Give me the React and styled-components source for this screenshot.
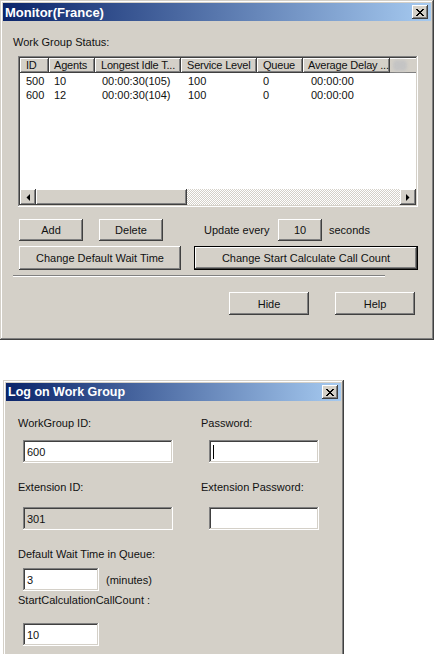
import React from 'react';
import styled, { createGlobalStyle, css } from 'styled-components';

const face = '#D4D0C8';

const GlobalStyle = createGlobalStyle`
  html, body {
    margin: 0;
    padding: 0;
    background: #ffffff;
    overflow: hidden;
  }
  body {
    font-family: "Liberation Sans", Arial, sans-serif;
    font-size: 11px;
    color: #111111;
  }
`;

const raised = css`
  box-shadow: inset -1px -1px #404040, inset 1px 1px #ffffff,
    inset -2px -2px #808080, inset 2px 2px ${face};
`;

const sunken = css`
  box-shadow: inset -1px -1px #ffffff, inset 1px 1px #808080,
    inset -2px -2px ${face}, inset 2px 2px #404040;
`;

const Page = styled.div`
  display: flex;
  flex-direction: column;
  align-items: flex-start;
  height: 654px;
  overflow: hidden;
`;

const Window = styled.div`
  box-sizing: border-box;
  flex-shrink: 0;
  width: ${p => p.$w}px;
  height: ${p => p.$h}px;
  margin: ${p => p.$m};
  padding: 3px;
  background: ${face};
  box-shadow: inset -1px -1px #404040, inset 1px 1px ${face},
    inset -2px -2px #808080, inset 2px 2px #ffffff;
`;

const TitleBar = styled.div`
  height: 18px;
  display: flex;
  align-items: center;
  justify-content: space-between;
  padding: 0 3px 0 2px;
  background: linear-gradient(to right, #0a246a, #a6caf0);
  color: #ffffff;
  font-weight: bold;
  font-size: ${p => p.$size}px;
`;

const CloseBtn = styled.div`
  width: 16px;
  height: 14px;
  display: flex;
  align-items: center;
  justify-content: center;
  background: ${face};
  ${raised};
`;

const xPixels = [
  '11....11',
  '.11..11.',
  '..1111..',
  '...11...',
  '..1111..',
  '.11..11.',
  '11....11',
];

const CloseGlyph = () => (
  <svg width="8" height="7" viewBox="0 0 8 7" shapeRendering="crispEdges">
    {xPixels.map((row, y) =>
      row.split('').map((c, x) =>
        c === '1' ? <rect key={`${x}-${y}`} x={x} y={y} width="1" height="1" fill="#000" /> : null
      )
    )}
  </svg>
);

const Body = styled.div`
  padding: ${p => p.$pad};
`;

const Label = styled.div`
  line-height: 14px;
  height: 14px;
  white-space: nowrap;
  margin-top: ${p => p.$mt || 0}px;
`;

/* ---------- list view ---------- */

const cols = [29, 46, 86, 76, 46, 87];
const headPad = [6, 5, 6, 6, 6, 5];

const ListView = styled.div`
  box-sizing: border-box;
  width: 400px;
  height: 151px;
  margin: 7px 0 0 5px;
  padding: 2px;
  background: #ffffff;
  display: flex;
  flex-direction: column;
  ${sunken};
`;

const HeaderRow = styled.div`
  display: flex;
  height: 15px;
  flex-shrink: 0;
`;

const HeaderCell = styled.div`
  box-sizing: border-box;
  width: ${p => p.$w}px;
  flex-shrink: 0;
  padding-left: ${p => p.$pl}px;
  line-height: 15px;
  letter-spacing: -0.2px;
  white-space: nowrap;
  overflow: hidden;
  background: ${face};
  box-shadow: inset -1px -1px #404040, inset 1px 1px #ffffff, inset -2px -2px #808080;
`;

const HeaderFiller = styled.div`
  flex: 1;
  background: ${face};
  box-shadow: inset 0 1px #ffffff, inset 0 -1px #808080;
  display: flex;
  align-items: center;
  padding-left: 3px;
`;

const Smudge = styled.div`
  width: 14px;
  height: 11px;
  border-radius: 4px;
  background: #c4c4c4;
  filter: blur(1.5px);
`;

const Rows = styled.div`
  flex: 1;
  padding-top: 1px;
`;

const DataRow = styled.div`
  display: flex;
  height: 14px;
  line-height: 14px;
`;

const DataCell = styled.div`
  box-sizing: border-box;
  width: ${p => p.$w}px;
  flex-shrink: 0;
  padding-left: ${p => p.$pl}px;
  white-space: nowrap;
`;

const HScroll = styled.div`
  display: flex;
  height: 16px;
  flex-shrink: 0;
`;

const ScrollArrow = styled.div`
  width: 16px;
  height: 16px;
  flex-shrink: 0;
  display: flex;
  align-items: center;
  justify-content: center;
  background: ${face};
  ${raised};
`;

const Thumb = styled.div`
  width: 151px;
  flex-shrink: 0;
  background: ${face};
  ${raised};
`;

const Track = styled.div`
  flex: 1;
  background-color: #ffffff;
  background-image: repeating-conic-gradient(${face} 0 25%, #ffffff 0 50%);
  background-size: 2px 2px;
`;

const Arrow = ({ dir }) => (
  <svg width="4" height="7" viewBox="0 0 4 7">
    {dir === 'left'
      ? <polygon points="4,0 4,7 0.5,3.5" fill="#000" />
      : <polygon points="0,0 0,7 3.5,3.5" fill="#000" />}
  </svg>
);

/* ---------- buttons ---------- */

const ButtonRow = styled.div`
  display: flex;
  align-items: center;
  justify-content: ${p => p.$justify || 'flex-start'};
  margin: ${p => p.$m};
`;

const Button = styled.div`
  box-sizing: border-box;
  width: ${p => p.$w}px;
  height: ${p => p.$h}px;
  margin-left: ${p => p.$ml || 0}px;
  flex-shrink: 0;
  display: flex;
  align-items: center;
  justify-content: center;
  white-space: nowrap;
  background: ${face};
  ${raised};
  ${p => p.$default && css`
    border: 1px solid #000;
  `}
`;

const Text = styled.span`
  display: inline-block;
  width: ${p => (p.$w ? `${p.$w}px` : 'auto')};
  margin-left: ${p => p.$ml || 0}px;
  white-space: nowrap;
`;

const Separator = styled.div`
  width: 372px;
  height: 0;
  margin-top: 5px;
  border-top: 1px solid #808080;
  border-bottom: 1px solid #ffffff;
`;

/* ---------- log on form ---------- */

const FormRow = styled.div`
  display: flex;
  align-items: flex-start;
  margin-top: ${p => p.$mt || 0}px;
`;

const Column = styled.div`
  width: ${p => p.$w}px;
  flex-shrink: 0;
`;

const FieldLine = styled.div`
  display: flex;
  align-items: center;
  margin-top: ${p => p.$mt || 0}px;
`;

const Field = styled.div`
  box-sizing: border-box;
  width: ${p => p.$w}px;
  height: 23px;
  margin-left: ${p => p.$ml}px;
  padding: 0 4px;
  display: flex;
  align-items: center;
  background: ${p => (p.$disabled ? face : '#ffffff')};
  ${sunken};
`;

const Caret = styled.span`
  width: 1px;
  height: 14px;
  background: #000;
`;

const listRows = [
  ['500', '10', '00:00:30(105)', '100', '0', '00:00:00'],
  ['600', '12', '00:00:30(104)', '100', '0', '00:00:00'],
];
const headers = ['ID', 'Agents', 'Longest Idle T...', 'Service Level', 'Queue', 'Average Delay ...'];
const cellPad = [6, 5, 7, 7, 6, 8];

const MonitorWindow = () => (
  <Window $w={434} $h={340} $m="0">
    <TitleBar $size={13}>
      <span>Monitor(France)</span>
      <CloseBtn><CloseGlyph /></CloseBtn>
    </TitleBar>
    <Body $pad="14px 0 0 10px">
      <Label>Work Group Status:</Label>
      <ListView>
        <HeaderRow>
          {headers.map((h, i) => (
            <HeaderCell key={h} $w={cols[i]} $pl={headPad[i]}>{h}</HeaderCell>
          ))}
          <HeaderFiller><Smudge /></HeaderFiller>
        </HeaderRow>
        <Rows>
          {listRows.map((r, ri) => (
            <DataRow key={ri}>
              {r.map((c, i) => (
                <DataCell key={i} $w={cols[i]} $pl={cellPad[i]}>{c}</DataCell>
              ))}
            </DataRow>
          ))}
        </Rows>
        <HScroll>
          <ScrollArrow><Arrow dir="left" /></ScrollArrow>
          <Thumb />
          <Track />
          <ScrollArrow><Arrow dir="right" /></ScrollArrow>
        </HScroll>
      </ListView>
      <ButtonRow $m="12px 0 0 6px">
        <Button $w={64} $h={22}>Add</Button>
        <Button $w={64} $h={22} $ml={16}>Delete</Button>
        <Text $w={74} $ml={41}>Update every</Text>
        <Button $w={44} $h={22}>10</Button>
        <Text $ml={7}>seconds</Text>
      </ButtonRow>
      <ButtonRow $m="5px 0 0 6px">
        <Button $w={162} $h={24}>Change Default Wait Time</Button>
        <Button $w={224} $h={24} $ml={13} $default>Change Start Calculate Call Count</Button>
      </ButtonRow>
      <Separator />
      <ButtonRow $m="15px 16px 0 0" $justify="flex-end">
        <Button $w={80} $h={23}>Hide</Button>
        <Button $w={80} $h={23} $ml={26}>Help</Button>
      </ButtonRow>
    </Body>
  </Window>
);

const LogonWindow = () => (
  <Window $w={341} $h={300} $m="40px 0 0 3px">
    <TitleBar $size={12.5}>
      <span>Log on Work Group</span>
      <CloseBtn><CloseGlyph /></CloseBtn>
    </TitleBar>
    <Body $pad="15px 0 0 12px">
      <FormRow>
        <Column $w={183}>
          <Label>WorkGroup ID:</Label>
          <FieldLine $mt={10}><Field $w={150} $ml={5}>600</Field></FieldLine>
        </Column>
        <Column $w={130}>
          <Label>Password:</Label>
          <FieldLine $mt={10}><Field $w={110} $ml={8}><Caret /></Field></FieldLine>
        </Column>
      </FormRow>
      <FormRow $mt={17}>
        <Column $w={183}>
          <Label>Extension ID:</Label>
          <FieldLine $mt={13}><Field $w={150} $ml={5} $disabled>301</Field></FieldLine>
        </Column>
        <Column $w={130}>
          <Label>Extension Password:</Label>
          <FieldLine $mt={13}><Field $w={110} $ml={8} /></FieldLine>
        </Column>
      </FormRow>
      <Label $mt={17}>Default Wait Time in Queue:</Label>
      <FieldLine $mt={7}>
        <Field $w={76} $ml={5}>3</Field>
        <Text $ml={7}>(minutes)</Text>
      </FieldLine>
      <Label $mt={2}>StartCalculationCallCount :</Label>
      <FieldLine $mt={16}>
        <Field $w={76} $ml={5}>10</Field>
      </FieldLine>
    </Body>
  </Window>
);

const App = () => (
  <>
    <GlobalStyle />
    <Page>
      <MonitorWindow />
      <LogonWindow />
    </Page>
  </>
);

export default App;
